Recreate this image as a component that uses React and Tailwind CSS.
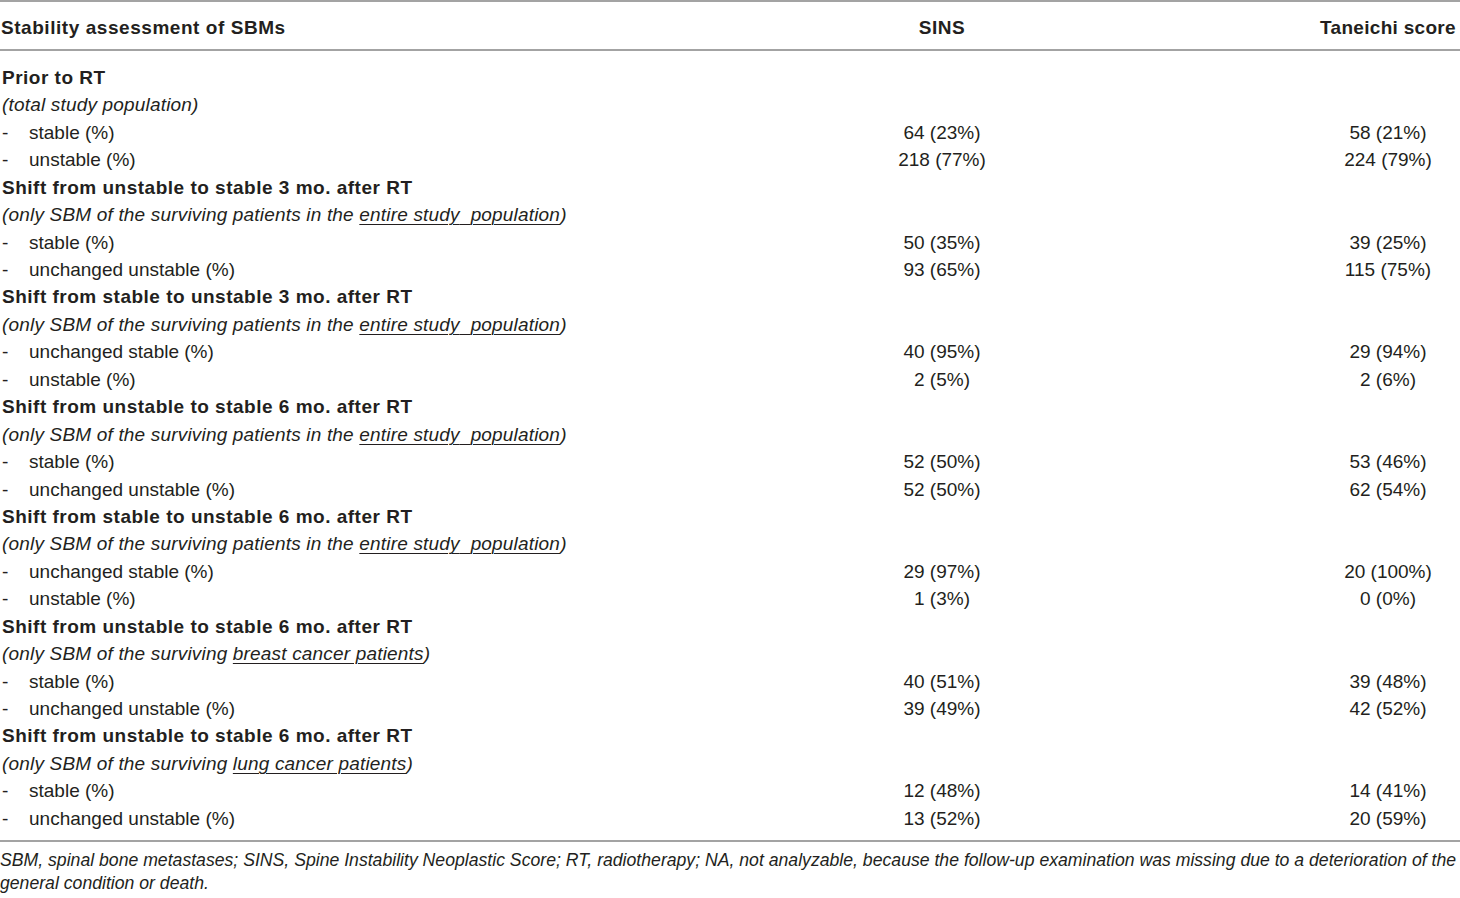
import React from "react";

const U = ({ children }) => (
  <span className="underline decoration-1 underline-offset-[3px]">{children}</span>
);

const ENTIRE = (
  <>
    (only SBM of the surviving patients in the <U>entire study{"\u00a0\u00a0"}population</U>)
  </>
);

const sections = [
  {
    title: "Prior to RT",
    sub: <>(total study population)</>,
    rows: [
      ["stable (%)", "64 (23%)", "58 (21%)"],
      ["unstable (%)", "218 (77%)", "224 (79%)"],
    ],
  },
  {
    title: "Shift from unstable to stable 3 mo. after RT",
    sub: ENTIRE,
    rows: [
      ["stable (%)", "50 (35%)", "39 (25%)"],
      ["unchanged unstable (%)", "93 (65%)", "115 (75%)"],
    ],
  },
  {
    title: "Shift from stable to unstable 3 mo. after RT",
    sub: ENTIRE,
    rows: [
      ["unchanged stable (%)", "40 (95%)", "29 (94%)"],
      ["unstable (%)", "2 (5%)", "2 (6%)"],
    ],
  },
  {
    title: "Shift from unstable to stable 6 mo. after RT",
    sub: ENTIRE,
    rows: [
      ["stable (%)", "52 (50%)", "53 (46%)"],
      ["unchanged unstable (%)", "52 (50%)", "62 (54%)"],
    ],
  },
  {
    title: "Shift from stable to unstable 6 mo. after RT",
    sub: ENTIRE,
    rows: [
      ["unchanged stable (%)", "29 (97%)", "20 (100%)"],
      ["unstable (%)", "1 (3%)", "0 (0%)"],
    ],
  },
  {
    title: "Shift from unstable to stable 6 mo. after RT",
    sub: (
      <>
        (only SBM of the surviving <U>breast cancer patients</U>)
      </>
    ),
    rows: [
      ["stable (%)", "40 (51%)", "39 (48%)"],
      ["unchanged unstable (%)", "39 (49%)", "42 (52%)"],
    ],
  },
  {
    title: "Shift from unstable to stable 6 mo. after RT",
    sub: (
      <>
        (only SBM of the surviving <U>lung cancer patients</U>)
      </>
    ),
    rows: [
      ["stable (%)", "12 (48%)", "14 (41%)"],
      ["unchanged unstable (%)", "13 (52%)", "20 (59%)"],
    ],
  },
];

function Row({ left, sins, tan }) {
  return (
    <div className="grid grid-cols-[802px_280px_1fr] h-[27.45px] leading-[27.45px]">
      <div className="pl-[2px] whitespace-nowrap">{left}</div>
      <div className="text-center whitespace-nowrap">{sins}</div>
      <div className="flex justify-end">
        <div className="w-[144px] text-center whitespace-nowrap">{tan}</div>
      </div>
    </div>
  );
}

export default function App() {
  return (
    <div className="w-[1460px] h-[898px] bg-white text-[#231f20] font-['Liberation_Sans',Arial,sans-serif] text-[19px] overflow-hidden">
      <div className="border-t-2 border-[#a3a3a3]" />
      <div className="pt-[11.5px] pb-[8.5px] border-b-2 border-[#a3a3a3] font-bold tracking-[0.55px]">
        <div className="grid grid-cols-[802px_280px_1fr] h-[27.45px] leading-[27.45px]">
          <div className="pl-[1px] whitespace-nowrap">Stability assessment of SBMs</div>
          <div className="text-center">SINS</div>
          <div className="flex justify-end">
            <div className="w-[144px] text-center whitespace-nowrap tracking-[0.3px]">Taneichi score</div>
          </div>
        </div>
      </div>
      <div className="pt-[12.5px] pb-[7.5px] border-b-2 border-[#a3a3a3]">
        {sections.map((s, i) => (
          <React.Fragment key={i}>
            <Row left={<span className="font-bold tracking-[0.5px]">{s.title}</span>} />
            <Row left={<span className="italic tracking-[0.18px]">{s.sub}</span>} />
            {s.rows.map((r, j) => (
              <Row
                key={j}
                left={
                  <span className="flex">
                    <span className="w-[27px]">-</span>
                    <span>{r[0]}</span>
                  </span>
                }
                sins={r[1]}
                tan={r[2]}
              />
            ))}
          </React.Fragment>
        ))}
      </div>
      <p className="pt-[7px] italic text-[17.65px] leading-[23px]">
        SBM, spinal bone metastases; SINS, Spine Instability Neoplastic Score; RT, radiotherapy; NA, not analyzable, because the follow-up examination was missing due to a deterioration of the general condition or death.
      </p>
    </div>
  );
}
